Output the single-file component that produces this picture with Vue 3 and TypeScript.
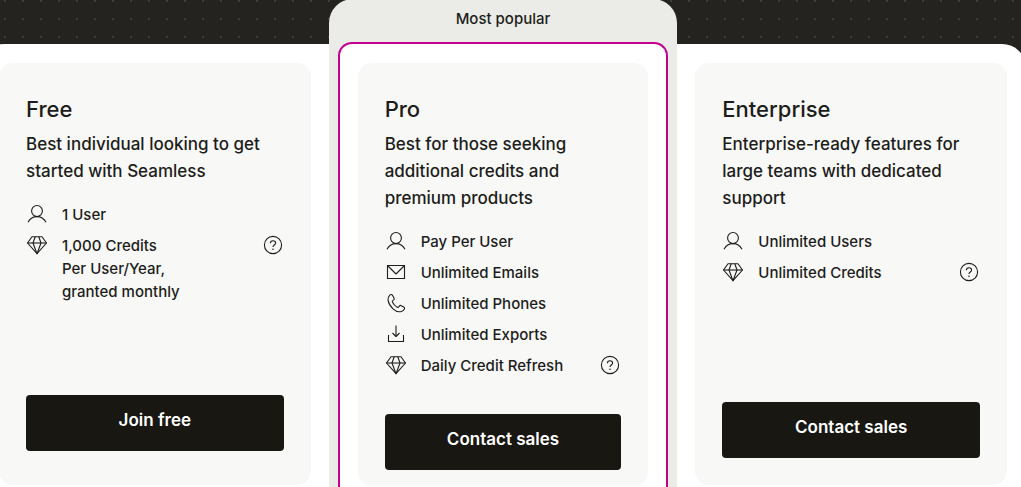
<script setup lang="ts">
type IconName = 'user' | 'gem' | 'mail' | 'phone' | 'export'

interface Feature {
  icon: IconName
  lines: string[]
  help?: boolean
}

interface Plan {
  id: string
  name: string
  summary: string
  badge?: string
  features: Feature[]
  action: string
}

const icons: Record<IconName, string[]> = {
  user: [
    'M11 2.5C14 2.5 16.4 4.9 16.4 8S14 13.6 11 13.6 5.6 11.1 5.6 8 8 2.5 11 2.5Z',
    'M2 19.2C4 15.6 7.2 13.6 11 13.6S18 15.6 20 19.2',
  ],
  gem: [
    'M6 2.7H16L20.5 9 11 19.7 1.5 9Z',
    'M1.5 9H20.5',
    'M9.2 2.7 7 9 11 19.7 15 9 12.8 2.7',
  ],
  mail: ['M2.5 4.5H19.5V17.5H2.5Z', 'M2.5 4.5 11 13 19.5 4.5'],
  phone: [
    'M7.3 3C6.5 2.3 5.4 2.5 4.6 3.3 3.3 4.5 2.7 6.2 3 8.2 3.5 11.3 5.4 14.4 8 16.8 10.4 19 13.3 20.1 15.7 19.7 17.5 19.4 19 18.3 19.5 16.9 19.8 16.2 19.6 15.6 19 15.2L16.4 13.7C15.6 13.2 14.8 13.4 14.3 14.1L13.7 14.9C13.2 15.5 12.6 15.5 11.9 15.1 10 13.9 8.5 12.2 7.5 10.3 7.1 9.6 7.2 9 7.8 8.6L8.5 8.1C9.2 7.6 9.4 6.900 9 6.1Z',
  ],
  export: ['M11 2.5V13.5', 'M7.5 10 11 13.5 14.5 10', 'M3.5 12V18.5H18.5V12'],
}

const plans: Plan[] = [
  {
    id: 'free',
    name: 'Free',
    summary: 'Best individual looking to get started with Seamless',
    features: [
      { icon: 'user', lines: ['1 User'] },
      { icon: 'gem', lines: ['1,000 Credits', 'Per User/Year,', 'granted monthly'], help: true },
    ],
    action: 'Join free',
  },
  {
    id: 'pro',
    name: 'Pro',
    summary: 'Best for those seeking additional credits and premium products',
    badge: 'Most popular',
    features: [
      { icon: 'user', lines: ['Pay Per User'] },
      { icon: 'mail', lines: ['Unlimited Emails'] },
      { icon: 'phone', lines: ['Unlimited Phones'] },
      { icon: 'export', lines: ['Unlimited Exports'] },
      { icon: 'gem', lines: ['Daily Credit Refresh'], help: true },
    ],
    action: 'Contact sales',
  },
  {
    id: 'enterprise',
    name: 'Enterprise',
    summary: 'Enterprise-ready features for large teams with dedicated support',
    features: [
      { icon: 'user', lines: ['Unlimited Users'] },
      { icon: 'gem', lines: ['Unlimited Credits'], help: true },
    ],
    action: 'Contact sales',
  },
]
</script>

<template>
  <main class="page">
    <div class="plans">
      <section v-for="plan in plans" :key="plan.id" class="plan" :class="`plan--${plan.id}`">
        <p v-if="plan.badge" class="badge">{{ plan.badge }}</p>
        <div class="panel">
          <article class="card">
            <h2 class="name">{{ plan.name }}</h2>
            <p class="summary">{{ plan.summary }}</p>
            <ul class="features">
              <li v-for="feature in plan.features" :key="feature.lines[0]" class="feature">
                <svg class="icon" viewBox="0 0 22 22" aria-hidden="true">
                  <path v-for="d in icons[feature.icon]" :key="d" :d="d" />
                </svg>
                <span class="label">
                  <span v-for="line in feature.lines" :key="line" class="line">{{ line }}</span>
                </span>
                <button v-if="feature.help" type="button" class="help" aria-label="About credits">
                  <svg class="icon" viewBox="0 0 22 22" aria-hidden="true">
                    <circle cx="11" cy="11" r="8.6" />
                    <path d="M8.4 9.2C8.4 7.6 9.5 6.7 11 6.7S13.6 7.6 13.6 9C13.6 10.9 11 11 11 12.9" />
                    <circle class="dot" cx="11" cy="15.3" r="0.8" />
                  </svg>
                </button>
              </li>
            </ul>
            <button type="button" class="action">{{ plan.action }}</button>
          </article>
        </div>
      </section>
    </div>
  </main>
</template>

<style>
body {
  margin: 0;
}
</style>

<style scoped>
.page {
  display: flex;
  min-height: 100vh;
  overflow: hidden;
  background: conic-gradient(from 270deg at 2px 2px, #3e3d39 90deg, #24231f 0) 4px 0 / 18px 18px;
  color: #1d1d1b;
  font-family: Inter, "Liberation Sans", sans-serif;
}

.plans {
  display: grid;
  grid-template-columns: repeat(3, minmax(0, 1fr));
  flex: 1;
  margin: -1px -5px 0 -20px;
}

.plan {
  display: flex;
  flex-direction: column;
  padding-top: 45px;
}

.plan--pro {
  padding: 0 9px;
  border-radius: 24px 24px 0 0;
  background: #ebece7;
}

.badge {
  margin: 0;
  padding: 9px 0 12px;
  font-size: 15px;
  font-weight: 500;
  line-height: 22px;
  text-align: center;
}

.panel {
  flex: 1;
  padding: 19px 18px 0;
  background: #fff;
}

.plan--free .panel {
  padding-left: 19px;
  border-top-left-radius: 24px;
}

.plan--enterprise .panel {
  padding-right: 19px;
  border-top-right-radius: 24px;
}

.plan--pro .panel {
  border: 2px solid #c4008f;
  border-bottom: 0;
  border-radius: 14px 14px 0 0;
}

.card {
  display: flex;
  flex-direction: column;
  box-sizing: border-box;
  min-height: 422px;
  padding: 30px 27px 34px;
  border-radius: 14px;
  background: #f8f8f6;
}

.plan--pro .card {
  min-height: 423px;
  padding-bottom: 16px;
}

.plan--enterprise .card {
  padding-bottom: 27px;
}

.name {
  margin: 0 0 6px;
  font-size: 22px;
  font-weight: 500;
  line-height: 32px;
}

.summary {
  margin: 0 0 18px;
  font-size: 17px;
  font-weight: 500;
  line-height: 27px;
}

.features {
  display: flex;
  flex-direction: column;
  gap: 8px;
  margin: 0 0 32px;
  padding: 0;
  list-style: none;
}

.feature {
  display: flex;
  align-items: flex-start;
  gap: 14px;
}

.icon {
  display: block;
  flex: none;
  width: 22px;
  height: 22px;
  fill: none;
  stroke: #1d1d1b;
  stroke-width: 1.1;
  stroke-linejoin: round;
}

.dot {
  fill: #1d1d1b;
  stroke: none;
}

.label {
  flex: 1;
  font-size: 15px;
  font-weight: 500;
  line-height: 23px;
}

.line {
  display: block;
}

.help {
  padding: 0;
  border: 0;
  background: none;
  cursor: pointer;
}

.action {
  height: 56px;
  margin-top: auto;
  padding: 0 0 6px;
  border: 0;
  border-radius: 4px;
  background: #181712;
  color: #fff;
  font: 600 17px/24px Inter, "Liberation Sans", sans-serif;
  cursor: pointer;
}
</style>
